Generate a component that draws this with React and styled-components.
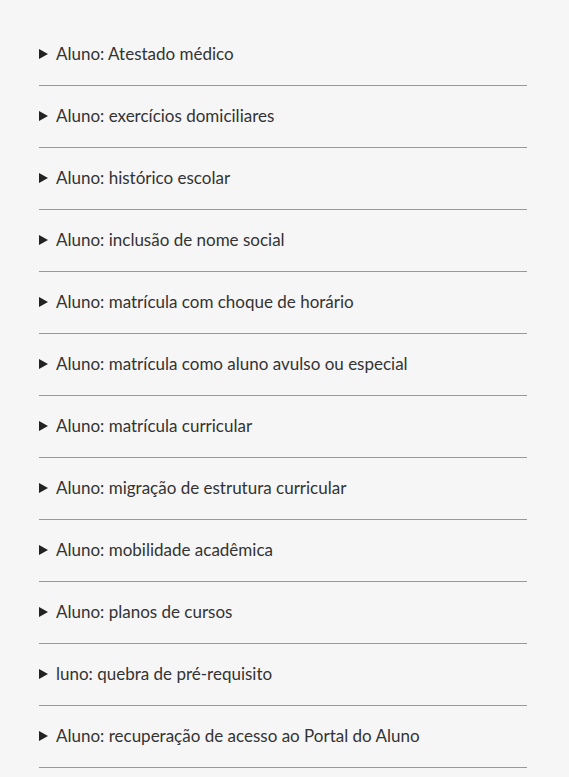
import React from 'react'
import styled, { createGlobalStyle } from 'styled-components'

const GlobalStyle = createGlobalStyle`
  html, body {
    margin: 0;
    background: #f6f6f6;
  }
`

const List = styled.div`
  padding: 24px 42px 0 39px;
  font-family: 'Lato', 'Open Sans', sans-serif;
  color: #333;
`

const Item = styled.details`
  border-bottom: 1px solid #999;
`

const Summary = styled.summary`
  display: flex;
  align-items: center;
  gap: 8px;
  padding: 18px 0 19px;
  font-size: 17px;
  line-height: 24px;
  cursor: pointer;
  list-style: none;

  &::-webkit-details-marker {
    display: none;
  }
`

const Arrow = styled.svg`
  width: 9px;
  height: 10px;
  flex: none;
  fill: #222;
`

const topics = [
  'Aluno: Atestado médico',
  'Aluno: exercícios domiciliares',
  'Aluno: histórico escolar',
  'Aluno: inclusão de nome social',
  'Aluno: matrícula com choque de horário',
  'Aluno: matrícula como aluno avulso ou especial',
  'Aluno: matrícula curricular',
  'Aluno: migração de estrutura curricular',
  'Aluno: mobilidade acadêmica',
  'Aluno: planos de cursos',
  'luno: quebra de pré-requisito',
  'Aluno: recuperação de acesso ao Portal do Aluno'
]

export default function App () {
  return (
    <>
      <GlobalStyle />
      <List>
        {topics.map(topic => (
          <Item key={topic}>
            <Summary>
              <Arrow viewBox="0 0 9 10"><path d="M0 0 L9 5 L0 10 Z" /></Arrow>
              {topic}
            </Summary>
          </Item>
        ))}
      </List>
    </>
  )
}
